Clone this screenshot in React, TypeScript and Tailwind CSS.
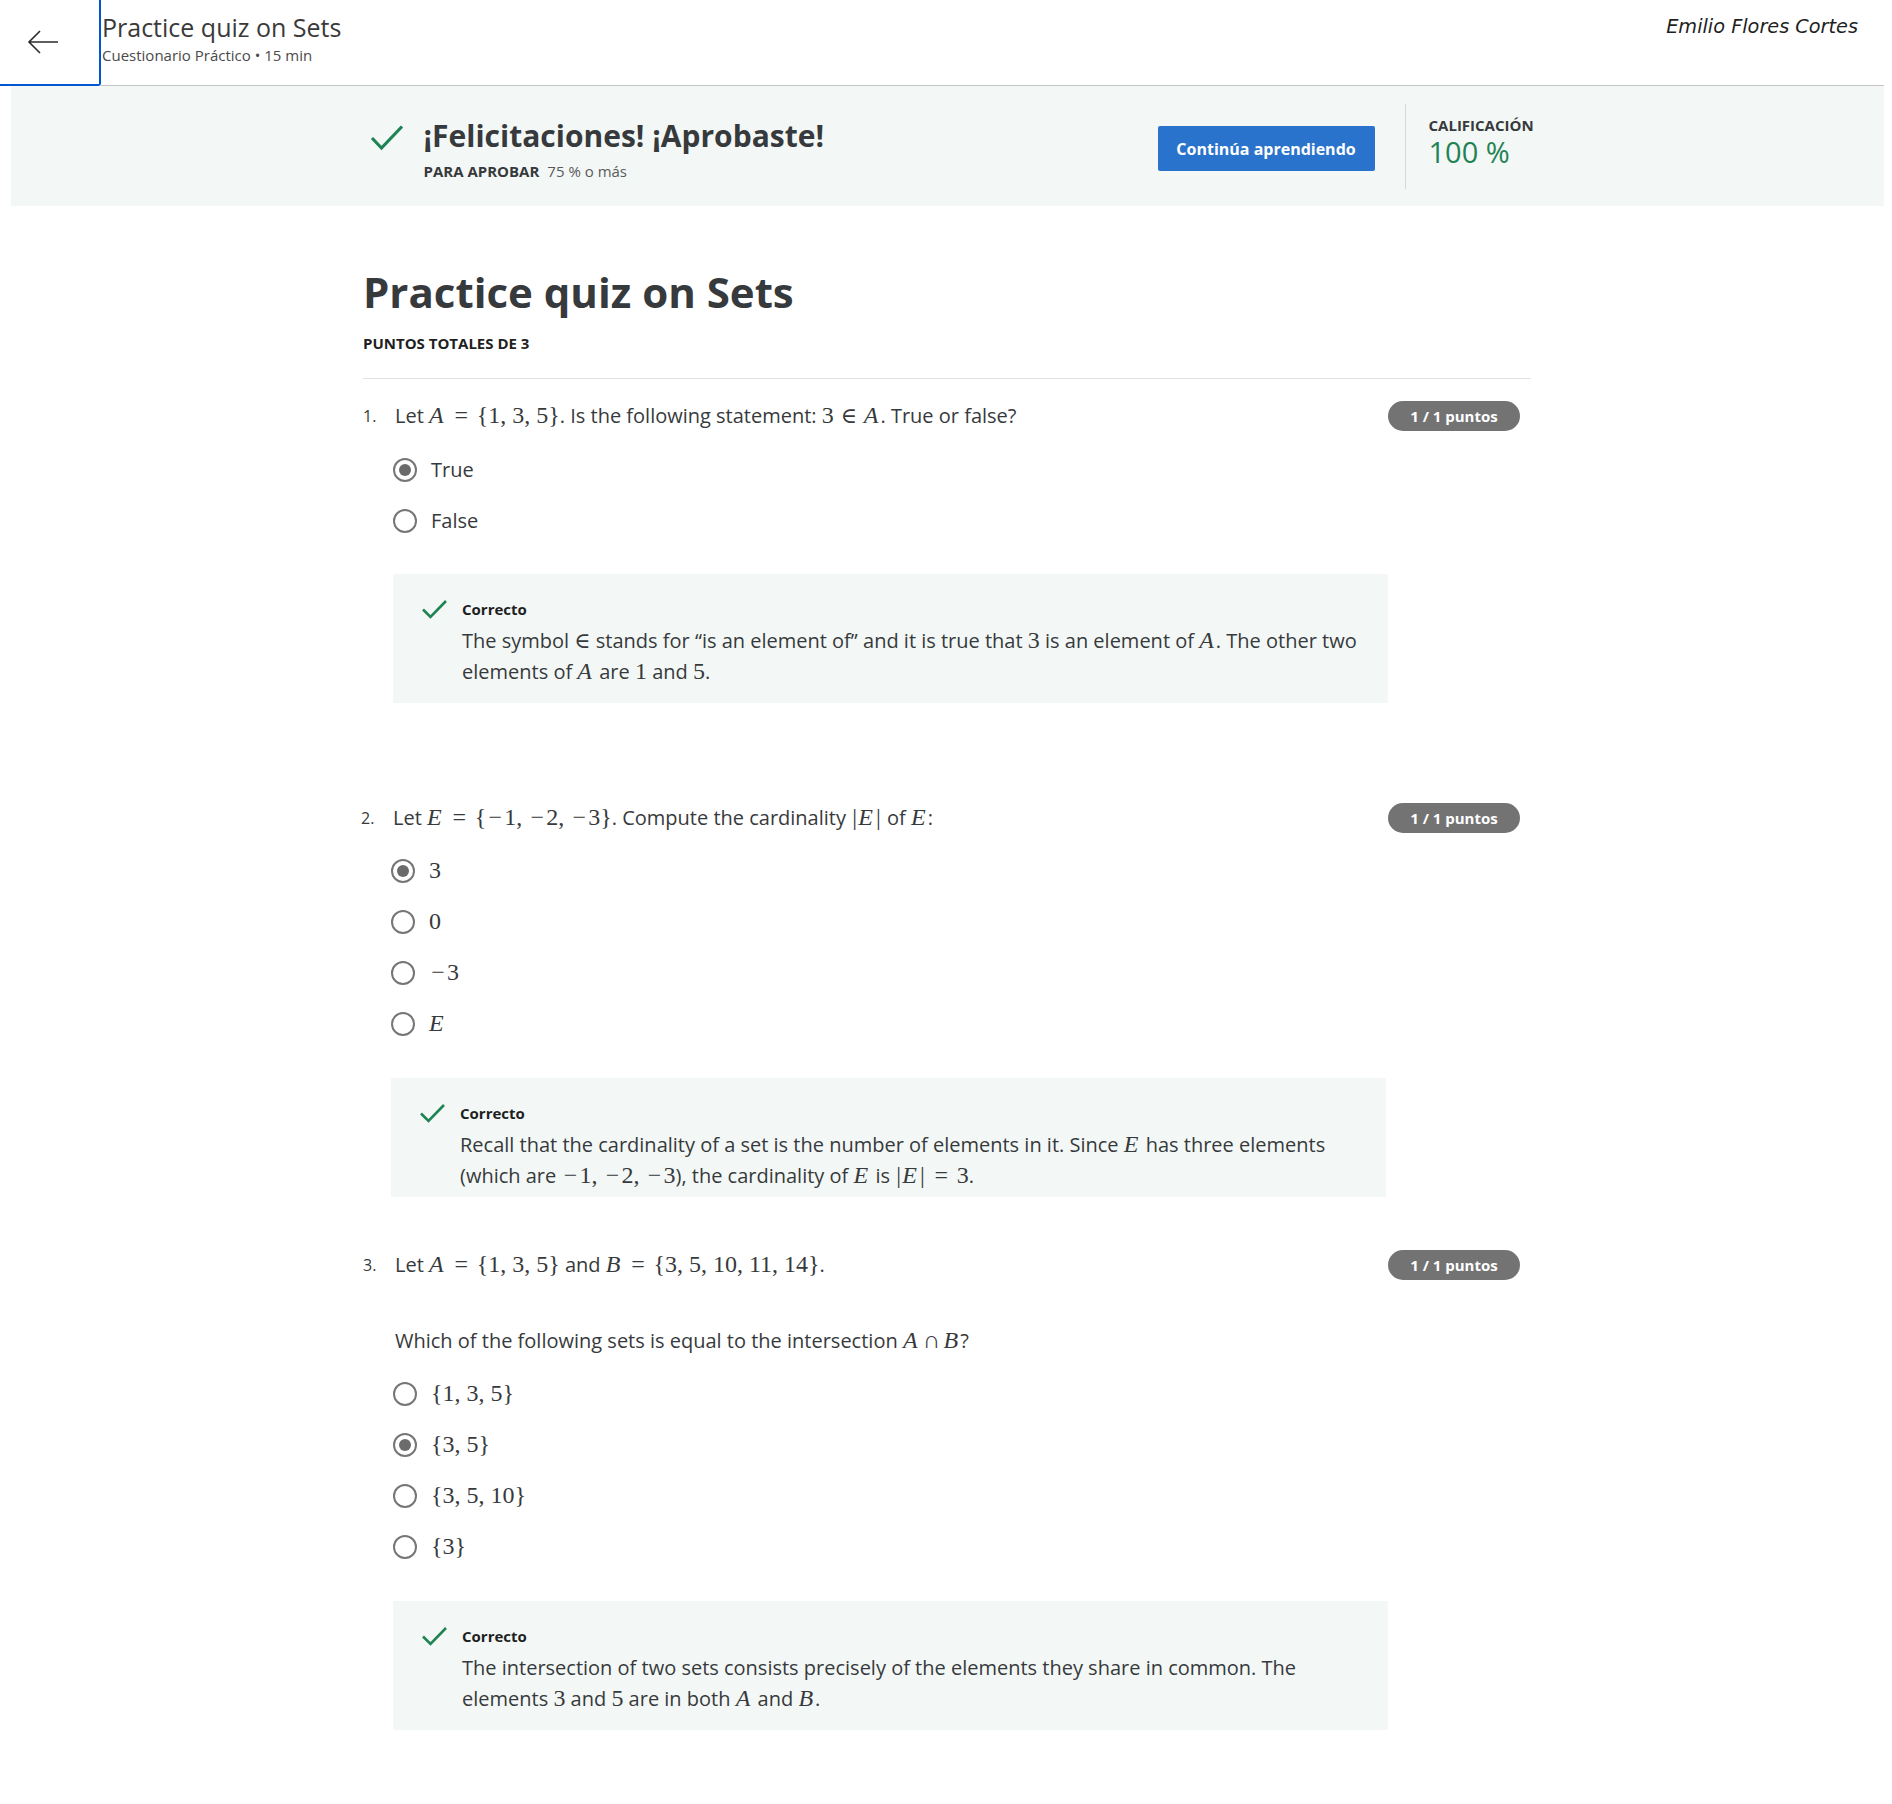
import React from "react";

const M = ({ children }: { children: React.ReactNode }) => (
  <span className="font-['Liberation_Serif',serif] text-[24px] leading-none">
    {children}
  </span>
);

const V = ({ children }: { children: React.ReactNode }) => (
  <span className="mr-[2px] font-['Liberation_Serif',serif] text-[24px] italic leading-none">
    {children}
  </span>
);

// relation / operator with the wide spacing a math renderer puts round it
const Rel = ({ c, w = "w-[31px]" }: { c: React.ReactNode; w?: string }) => (
  <span className={`inline-block text-center font-['Liberation_Serif',serif] text-[24px] leading-none ${w}`}>
    {c}
  </span>
);

const In = () => (
  <span className="font-['DejaVu_Serif',serif] text-[22px] font-light leading-none">∈</span>
);

const Minus = () => <span className="inline-block w-[18px] text-center">−</span>;

const Bar = () => <span className="inline-block w-[7px] text-center">|</span>;

const Check = ({ className }: { className?: string }) => (
  <svg viewBox="0 0 27 20" className={className} fill="none">
    <path d="M2 10.5 L9.5 18 L25 2" stroke="#1f8354" strokeWidth="2.6" />
  </svg>
);

const Radio = ({ checked }: { checked?: boolean }) => (
  <span className="flex h-6 w-6 shrink-0 items-center justify-center rounded-full border-2 border-[#767676]">
    {checked && <span className="h-3 w-3 rounded-full bg-[#6b6b6b]" />}
  </span>
);

const Option = ({ checked, children }: { checked?: boolean; children: React.ReactNode }) => (
  <div className="flex h-[51px] items-center gap-[14px] pl-[32px] text-[20px] text-[#373a3c]">
    <Radio checked={checked} />
    <span>{children}</span>
  </div>
);

const Badge = () => (
  <span className="mr-[11px] flex h-[30px] w-[132px] items-center justify-center rounded-full bg-[#737373] text-[15px] font-bold text-white">
    1 / 1 puntos
  </span>
);

const QuestionRow = ({ n, children }: { n: string; children: React.ReactNode }) => (
  <div className="flex h-[32px] items-center justify-between">
    <div className="flex items-center pl-[2px] text-[20px] text-[#373a3c]">
      <span className="w-[32px] text-[16px]">{n}</span>
      <span className="whitespace-nowrap">{children}</span>
    </div>
    <Badge />
  </div>
);

const Feedback = ({ h, lines }: { h: string; lines: React.ReactNode[] }) => (
  <div className={`ml-[32px] w-[995px] bg-[#f3f8f6] pl-[28px] pt-[25px] ${h}`}>
    <div className="flex items-start gap-[14px]">
      <Check className="h-[20px] w-[27px]" />
      <div>
        <div className="text-[15px] font-bold leading-[20px] text-[#1f1f1f]">Correcto</div>
        <div className="mt-[6px] text-[20px] leading-[31px] text-[#373a3c]">
          {lines.map((l, i) => (
            <div key={i} className="whitespace-nowrap">
              {l}
            </div>
          ))}
        </div>
      </div>
    </div>
  </div>
);

export default function App() {
  return (
    <div className="min-h-[1804px] w-full bg-white font-['Open_Sans',sans-serif] text-[#373a3c]">
      {/* top bar */}
      <header className="flex h-[86px] pr-[8px]">
        <button className="flex h-[86px] w-[101px] shrink-0 items-center rounded-br-[3px] border-b-2 border-r-2 border-[#0056d2] pl-[27px]">
          <svg viewBox="0 0 32 24" className="h-[24px] w-[32px]" fill="none">
            <path d="M31 12 H2 M13 1 L2 12 L13 23" stroke="#2b2b2b" strokeWidth="1.6" />
          </svg>
        </button>
        <div className="flex flex-1 border-b border-[#c4c4c4]">
          <div className="pl-[1px] pt-[10px]">
            <div className="text-[25px] leading-[34px] text-[#3a3a3a]">Practice quiz on Sets</div>
            <div className="mt-[1px] text-[15px] leading-[20px] text-[#4a4a4a]">
              Cuestionario Práctico • 15 min
            </div>
          </div>
          <div className="ml-auto pr-[26px] pt-[14px] font-['DejaVu_Sans',sans-serif] text-[19.3px] italic leading-[26px] text-[#1f1f1f]">
            Emilio Flores Cortes
          </div>
        </div>
      </header>

      {/* result banner */}
      <section className="ml-[11px] mr-[8px] h-[120px] bg-[#f3f8f6]">
        <div className="mx-auto flex w-[1170px] items-start">
          <div className="flex items-start pl-[7px] pt-[30px]">
            <svg viewBox="0 0 34 27" className="mt-[8px] h-[27px] w-[34px]" fill="none">
              <path d="M2 14 L11.5 24 L32 2.5" stroke="#1f8354" strokeWidth="3.2" />
            </svg>
            <div className="ml-[20px]">
              <h2 className="text-[30px] font-bold leading-[40px] text-[#373a3c]">
                ¡Felicitaciones! ¡Aprobaste!
              </h2>
              <div className="mt-[5px] flex items-center gap-[8px] leading-[20px]">
                <span className="text-[15px] font-bold text-[#373a3c]">PARA APROBAR</span>
                <span className="text-[15px] text-[#5a5a5a]">75 % o más</span>
              </div>
            </div>
          </div>
          <button className="ml-auto mt-[40px] h-[45px] w-[217px] rounded-[2px] bg-[#2a73cc] text-[16px] font-bold text-white">
            Continúa aprendiendo
          </button>
          <div className="ml-[30px] mt-[18px] h-[85px] w-px bg-[#d6d9d8]" />
          <div className="ml-[23px] mt-[29px] w-[104px]">
            <div className="text-[15px] font-bold leading-[20px] text-[#373a3c]">CALIFICACIÓN</div>
            <div className="text-[29px] leading-[34px] text-[#1f8354]">100 %</div>
          </div>
        </div>
      </section>

      {/* quiz */}
      <main className="mx-auto w-[1170px] pb-[73px]">
        <h1 className="mt-[61px] pl-[2px] text-[42px] font-bold leading-[50px] text-[#373a3c]">
          Practice quiz on Sets
        </h1>
        <div className="mt-[16px] pl-[2px] text-[15px] font-bold leading-[20px] text-[#1f1f1f]">
          PUNTOS TOTALES DE 3
        </div>
        <div className="ml-[2px] mt-[25px] h-px bg-[#e1e1e1]" />

        {/* Q1 */}
        <div className="mt-[21px]">
          <QuestionRow n="1.">
            Let <V>A</V>
            <Rel c="=" />
            <M>{"{"}1, 3, 5{"}"}</M>. Is the following statement: <M>3</M>
            <Rel c={<In />} w="w-[30px]" />
            <V>A</V>. True or false?
          </QuestionRow>
          <div className="mt-[12px]">
            <Option checked>True</Option>
            <Option>False</Option>
          </div>
          <div className="mt-[28px]">
            <Feedback
              h="h-[129px]"
              lines={[
                <>
                  The symbol <In /> stands for “is an element of” and it is true that <M>3</M> is an element
                  of <V>A</V>. The other two
                </>,
                <>
                  elements of <V>A</V> are <M>1</M> and <M>5</M>.
                </>,
              ]}
            />
          </div>
        </div>

        {/* Q2 */}
        <div className="-ml-[2px] mt-[99px]">
          <QuestionRow n="2.">
            Let <V>E</V>
            <Rel c="=" />
            <M>
              {"{"}
              <Minus />
              1, <Minus />
              2, <Minus />
              3{"}"}
            </M>
            . Compute the cardinality{" "}
            <M>
              <Bar />
            </M>
            <V>E</V>
            <M>
              <Bar />
            </M>{" "}
            of <V>E</V>:
          </QuestionRow>
          <div className="mt-[11px]">
            <Option checked>
              <M>3</M>
            </Option>
            <Option>
              <M>0</M>
            </Option>
            <Option>
              <M>
                <Minus />3
              </M>
            </Option>
            <Option>
              <V>E</V>
            </Option>
          </div>
          <div className="mt-[29px]">
            <Feedback
              h="h-[119px]"
              lines={[
                <>
                  Recall that the cardinality of a set is the number of elements in it. Since <V>E</V> has
                  three elements
                </>,
                <>
                  (which are{" "}
                  <M>
                    <Minus />
                    1, <Minus />
                    2, <Minus />3
                  </M>
                  ), the cardinality of <V>E</V> is{" "}
                  <M>
                    <Bar />
                  </M>
                  <V>E</V>
                  <M>
                    <Bar />
                  </M>
                  <Rel c="=" />
                  <M>3</M>.
                </>,
              ]}
            />
          </div>
        </div>

        {/* Q3 */}
        <div className="mt-[52px]">
          <QuestionRow n="3.">
            Let <V>A</V>
            <Rel c="=" />
            <M>{"{"}1, 3, 5{"}"}</M> and <V>B</V>
            <Rel c="=" />
            <M>{"{"}3, 5, 10, 11, 14{"}"}</M>.
          </QuestionRow>
          <div className="mt-[46px] pl-[34px] text-[20px] leading-[28px] text-[#373a3c]">
            Which of the following sets is equal to the intersection <V>A</V>
            <Rel c="∩" w="w-[24px]" />
            <V>B</V>?
          </div>
          <div className="mt-[13px]">
            <Option>
              <M>{"{"}1, 3, 5{"}"}</M>
            </Option>
            <Option checked>
              <M>{"{"}3, 5{"}"}</M>
            </Option>
            <Option>
              <M>{"{"}3, 5, 10{"}"}</M>
            </Option>
            <Option>
              <M>{"{"}3{"}"}</M>
            </Option>
          </div>
          <div className="mt-[29px]">
            <Feedback
              h="h-[129px]"
              lines={[
                <>
                  The intersection of two sets consists precisely of the elements they share in common. The
                </>,
                <>
                  elements <M>3</M> and <M>5</M> are in both <V>A</V> and <V>B</V>.
                </>,
              ]}
            />
          </div>
        </div>
      </main>
    </div>
  );
}
